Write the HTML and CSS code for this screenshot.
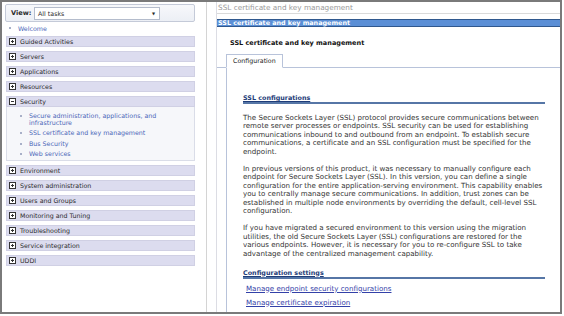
FILE: index.html
```html
<!DOCTYPE html>
<html lang="en">
<head>
  <meta charset="UTF-8" />
  <title>SSL certificate and key management</title>
  <link rel="stylesheet" href="styles.css">
</head>
<body>
  <div class="page">
    <div class="nav">
      <div class="view-bar">
        <span class="view-label">View:</span>
        <div class="view-select">
          <span>All tasks</span>
          <span class="arrow">&#9660;</span>
        </div>
      </div>
      <div class="welcome"><span class="dot"></span>Welcome</div>

      <div class="group"><svg class="pm" viewBox="0 0 7 7"><rect x="0.5" y="0.5" width="6" height="6" fill="#fff" stroke="#333"/><path d="M2 3.5h3M3.5 2v3" stroke="#333"/></svg>Guided Activities</div>
      <div class="group"><svg class="pm" viewBox="0 0 7 7"><rect x="0.5" y="0.5" width="6" height="6" fill="#fff" stroke="#333"/><path d="M2 3.5h3M3.5 2v3" stroke="#333"/></svg>Servers</div>
      <div class="group"><svg class="pm" viewBox="0 0 7 7"><rect x="0.5" y="0.5" width="6" height="6" fill="#fff" stroke="#333"/><path d="M2 3.5h3M3.5 2v3" stroke="#333"/></svg>Applications</div>
      <div class="group"><svg class="pm" viewBox="0 0 7 7"><rect x="0.5" y="0.5" width="6" height="6" fill="#fff" stroke="#333"/><path d="M2 3.5h3M3.5 2v3" stroke="#333"/></svg>Resources</div>
      <div class="group open"><svg class="pm" viewBox="0 0 7 7"><rect x="0.5" y="0.5" width="6" height="6" fill="#fff" stroke="#333"/><path d="M2 3.5h3" stroke="#333"/></svg>Security</div>
      <ul class="sub">
        <li>Secure administration, applications, and<br>infrastructure</li>
        <li>SSL certificate and key management</li>
        <li>Bus Security</li>
        <li>Web services</li>
      </ul>
      <div class="group"><svg class="pm" viewBox="0 0 7 7"><rect x="0.5" y="0.5" width="6" height="6" fill="#fff" stroke="#333"/><path d="M2 3.5h3M3.5 2v3" stroke="#333"/></svg>Environment</div>
      <div class="group"><svg class="pm" viewBox="0 0 7 7"><rect x="0.5" y="0.5" width="6" height="6" fill="#fff" stroke="#333"/><path d="M2 3.5h3M3.5 2v3" stroke="#333"/></svg>System administration</div>
      <div class="group"><svg class="pm" viewBox="0 0 7 7"><rect x="0.5" y="0.5" width="6" height="6" fill="#fff" stroke="#333"/><path d="M2 3.5h3M3.5 2v3" stroke="#333"/></svg>Users and Groups</div>
      <div class="group"><svg class="pm" viewBox="0 0 7 7"><rect x="0.5" y="0.5" width="6" height="6" fill="#fff" stroke="#333"/><path d="M2 3.5h3M3.5 2v3" stroke="#333"/></svg>Monitoring and Tuning</div>
      <div class="group"><svg class="pm" viewBox="0 0 7 7"><rect x="0.5" y="0.5" width="6" height="6" fill="#fff" stroke="#333"/><path d="M2 3.5h3M3.5 2v3" stroke="#333"/></svg>Troubleshooting</div>
      <div class="group"><svg class="pm" viewBox="0 0 7 7"><rect x="0.5" y="0.5" width="6" height="6" fill="#fff" stroke="#333"/><path d="M2 3.5h3M3.5 2v3" stroke="#333"/></svg>Service integration</div>
      <div class="group"><svg class="pm" viewBox="0 0 7 7"><rect x="0.5" y="0.5" width="6" height="6" fill="#fff" stroke="#333"/><path d="M2 3.5h3M3.5 2v3" stroke="#333"/></svg>UDDI</div>
    </div>

    <div class="main">
      <div class="crumb">SSL certificate and key management</div>
      <div class="title-bar">SSL certificate and key management</div>
      <div class="heading">SSL certificate and key management</div>
      <div class="tabs">
        <div class="tab">Configuration</div>
      </div>
      <div class="tab-body">
        <div class="section">SSL configurations</div>
        <p>The Secure Sockets Layer (SSL) protocol provides secure communications between<br>
        remote server processes or endpoints. SSL security can be used for establishing<br>
        communications inbound to and outbound from an endpoint. To establish secure<br>
        communications, a certificate and an SSL configuration must be specified for the<br>
        endpoint.</p>
        <p>In previous versions of this product, it was necessary to manually configure each<br>
        endpoint for Secure Sockets Layer (SSL). In this version, you can define a single<br>
        configuration for the entire application-serving environment. This capability enables<br>
        you to centrally manage secure communications. In addition, trust zones can be<br>
        established in multiple node environments by overriding the default, cell-level SSL<br>
        configuration.</p>
        <p>If you have migrated a secured environment to this version using the migration<br>
        utilities, the old Secure Sockets Layer (SSL) configurations are restored for the<br>
        various endpoints. However, it is necessary for you to re-configure SSL to take<br>
        advantage of the centralized management capability.</p>
        <div class="section settings">Configuration settings</div>
        <a class="link" href="#">Manage endpoint security configurations</a>
        <a class="link" href="#">Manage certificate expiration</a>
      </div>
    </div>
  </div>
</body>
</html>
```

FILE: styles.css
```css
* {
  box-sizing: border-box;
}

body {
  margin: 0;
  font-family: "DejaVu Sans", Verdana, sans-serif;
  background: #fff;
}

.page {
  width: 562px;
  height: 314px;
  border: 2px solid #7a7a7a;
  display: flex;
  overflow: hidden;
}

/* left navigation */

.nav {
  width: 205px;
  flex-shrink: 0;
  border-right: 1px solid #d4d4d4;
  padding: 2px 11px 0 4px;
  font-size: 6.3px;
  color: #2a2a2a;
}

.view-bar {
  height: 18px;
  margin-left: -1px;
  border: 1px solid #c4cad8;
  border-radius: 2px;
  background: linear-gradient(#f7f8fb, #eceff5);
  display: flex;
  align-items: center;
  padding-left: 5px;
}

.view-label {
  font-weight: bold;
  font-size: 6.6px;
  width: 23px;
}

.view-select {
  width: 126px;
  height: 13px;
  background: #fff;
  border: 1px solid #b4bccc;
  display: flex;
  align-items: center;
  justify-content: space-between;
  padding: 0 4px 0 3px;
  font-size: 6.3px;
}

.arrow {
  font-size: 4px;
}

.welcome {
  height: 10px;
  margin-top: 1px;
  display: flex;
  align-items: center;
  color: #4a66b8;
  padding-left: 3px;
}

.dot {
  width: 2px;
  height: 2px;
  background: #a8b0c8;
  margin-right: 7px;
}

.group {
  height: 11px;
  margin-top: 4px;
  background: #dcdcef;
  border: 1px solid #d0d0e4;
  display: flex;
  align-items: center;
  padding-left: 2px;
}

.welcome + .group {
  margin-top: 3px;
}

.pm {
  width: 7px;
  height: 7px;
  margin-right: 4px;
}

.sub {
  list-style: none;
  margin: 0;
  height: 54px;
  padding: 4.5px 0 0 13px;
  background: #f6f7fa;
  border: 1px solid #dadde8;
  border-top: none;
  line-height: 7px;
  color: #4a66b8;
}

.sub li {
  position: relative;
  padding-left: 9px;
  margin-bottom: 3.5px;
}

.sub li::before {
  content: "";
  position: absolute;
  left: 0;
  top: 3px;
  width: 2px;
  height: 2px;
  background: #a8b0c8;
}

/* main content */

.main {
  flex: 1;
  margin-left: 9px;
  border-left: 1px solid #dcdde4;
  display: flex;
  flex-direction: column;
}

.crumb {
  height: 12px;
  border-bottom: 1px solid #dadada;
  color: #9a9a9a;
  font-size: 7.3px;
  line-height: 11px;
  padding-left: 1px;
}

.title-bar {
  margin-top: 5px;
  height: 8px;
  background: #5b8fd6;
  border-top: 1px solid #30588e;
  border-bottom: 1px solid #30588e;
  color: #fff;
  font-weight: bold;
  font-size: 6.4px;
  line-height: 6px;
  padding-left: 1px;
}

.heading {
  margin-top: 11.5px;
  padding-left: 13px;
  font-weight: bold;
  font-size: 6.5px;
  line-height: 9px;
  color: #111;
}

.tabs {
  margin-top: 6.5px;
  padding-left: 9px;
  border-bottom: 1px solid #b8c3da;
  display: flex;
}

.tab {
  height: 14px;
  margin-bottom: -1px;
  border: 1px solid #b8c3da;
  border-bottom: 1px solid #fff;
  padding: 0 6px;
  font-size: 6.3px;
  line-height: 12px;
  color: #222;
  background: #fff;
}

.tab-body {
  flex: 1;
  margin-left: 9px;
  border-left: 1px solid #b8c3da;
  padding: 26px 15px 0 16px;
  font-size: 7.1px;
  line-height: 8.5px;
  color: #333;
}

.section {
  height: 10px;
  border-bottom: 2px solid #5676a6;
  color: #1e3c78;
  font-weight: bold;
  font-size: 6.4px;
  line-height: 8px;
  text-decoration: underline;
}

.tab-body p {
  margin: 8.5px 0 0;
  white-space: nowrap;
}

.section + p {
  margin-top: 9.5px;
}

.settings {
  margin-top: 10.5px;
}

.link {
  display: block;
  margin-top: 6px;
  padding-left: 3px;
  color: #3341a8;
  line-height: 8px;
}
```
